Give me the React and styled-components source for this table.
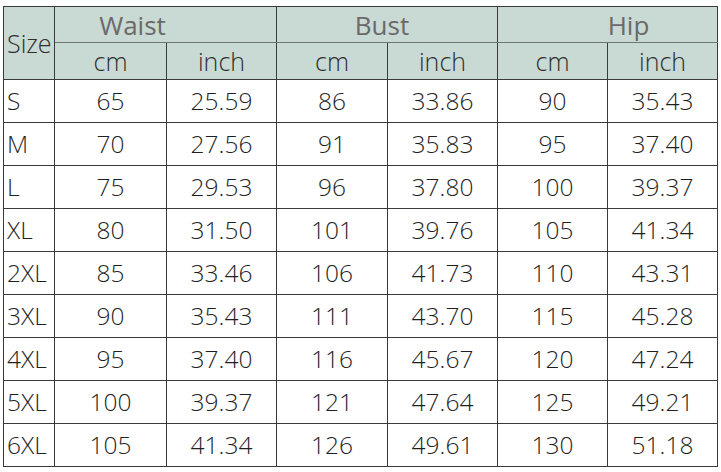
import React from "react";
import styled, { createGlobalStyle } from "styled-components";

const GlobalStyle = createGlobalStyle`
  html, body {
    margin: 0;
    padding: 0;
    background: #ffffff;
  }
  body {
    font-family: "Open Sans", "Noto Sans", sans-serif;
  }
`;

const rows = [
  ["S", 65, "25.59", 86, "33.86", 90, "35.43"],
  ["M", 70, "27.56", 91, "35.83", 95, "37.40"],
  ["L", 75, "29.53", 96, "37.80", 100, "39.37"],
  ["XL", 80, "31.50", 101, "39.76", 105, "41.34"],
  ["2XL", 85, "33.46", 106, "41.73", 110, "43.31"],
  ["3XL", 90, "35.43", 111, "43.70", 115, "45.28"],
  ["4XL", 95, "37.40", 116, "45.67", 120, "47.24"],
  ["5XL", 100, "39.37", 121, "47.64", 125, "49.21"],
  ["6XL", 105, "41.34", 126, "49.61", 130, "51.18"],
];

// group labels sit a little off-centre in the original
const groups = [
  { label: "Waist", shift: -66 },
  { label: "Bust", shift: -10 },
  { label: "Hip", shift: 42 },
];

const widths = [51, 112, 110, 111, 110, 110, 110];

const Wrap = styled.div`
  padding: 6px 0 0 3px;
`;

const Table = styled.table`
  border-collapse: collapse;
  table-layout: fixed;
  width: 715px;
  color: #1f1f1f;
  font-weight: 300;
`;

const Head = styled.th`
  background: #c9d9d3;
  border: 1px solid #3a3a3a;
  border-bottom-color: ${(p) => (p.$top ? "#6d7571" : "#3a3a3a")};
  font-weight: ${(p) => (p.$top ? 400 : 300)};
  padding: 0;
  height: ${(p) => (p.$top ? "35px" : "36px")};
  font-size: ${(p) => (p.$top ? "26px" : "25px")};
  color: ${(p) => (p.$top ? "#6a6a6a" : "#2e2e2e")};
  text-align: ${(p) => (p.$left ? "left" : "center")};
  padding-left: ${(p) => (p.$left ? "3px" : p.$shift > 0 ? `${p.$shift}px` : "0")};
  padding-right: ${(p) => (p.$shift < 0 ? `${-p.$shift}px` : "0")};
  line-height: 1;
`;

const Cell = styled.td`
  border: 1px solid #3a3a3a;
  height: 42px;
  padding: 0;
  font-size: 24.5px;
  line-height: 1;
  text-align: ${(p) => (p.$left ? "left" : "center")};
  padding-left: ${(p) => (p.$left ? "3px" : "0")};
`;

export default function App() {
  return (
    <>
      <GlobalStyle />
      <Wrap>
        <Table>
          <colgroup>
            {widths.map((w, i) => (
              <col key={i} style={{ width: w }} />
            ))}
          </colgroup>
          <thead>
            <tr>
              <Head rowSpan={2} $left>
                Size
              </Head>
              {groups.map((g) => (
                <Head key={g.label} colSpan={2} $top $shift={g.shift}>
                  {g.label}
                </Head>
              ))}
            </tr>
            <tr>
              {["cm", "inch", "cm", "inch", "cm", "inch"].map((u, i) => (
                <Head key={i}>{u}</Head>
              ))}
            </tr>
          </thead>
          <tbody>
            {rows.map((r) => (
              <tr key={r[0]}>
                {r.map((v, i) => (
                  <Cell key={i} $left={i === 0}>
                    {v}
                  </Cell>
                ))}
              </tr>
            ))}
          </tbody>
        </Table>
      </Wrap>
    </>
  );
}
